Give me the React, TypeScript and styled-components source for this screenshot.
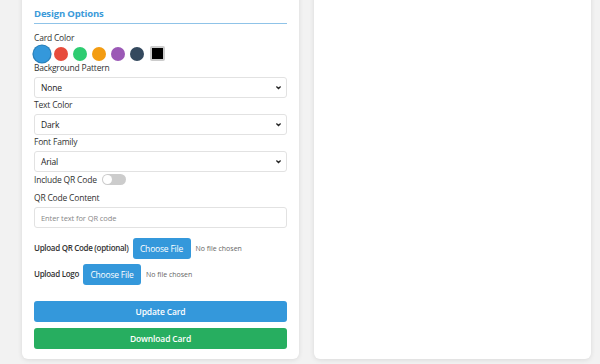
import * as React from 'react';
import styled, { createGlobalStyle } from 'styled-components';

const GlobalStyle = createGlobalStyle`
    html, body {
        margin: 0;
        padding: 0;
        background: #f2f2f2;
        font-family: 'Open Sans', 'Noto Sans', sans-serif;
        color: #333;
        overflow: hidden;
    }
`;

const Page = styled.div`
    display: grid;
    grid-template-columns: 277px 277px;
    gap: 15px;
    padding: 0 9px 5px 22px;
    margin-top: -12px;
`;

const Panel = styled.div`
    background: #fff;
    border-radius: 6px;
    box-shadow: 0 1px 5px rgba(0, 0, 0, 0.1);
    padding: 19px 12px 10px 12px;
    display: flex;
    flex-direction: column;
`;

const Heading = styled.h3`
    margin: 0 0 8px 0;
    font-size: 9.5px;
    line-height: 13px;
    font-weight: 700;
    letter-spacing: -0.15px;
    color: #3b9ad9;
    padding-bottom: 3px;
    border-bottom: 1px solid #8fc3e8;
`;

const Label = styled.label<{ $bold?: boolean }>`
    display: block;
    font-size: 8.5px;
    line-height: 11px;
    letter-spacing: -0.2px;
    color: #333;
    font-weight: ${(p) => (p.$bold ? 600 : 400)};
`;

const Swatches = styled.div`
    display: flex;
    align-items: center;
    gap: 5px;
    margin: 2px 0 0 0;
    height: 17px;
`;

const Swatch = styled.span<{ $color: string; $active?: boolean }>`
    width: 14px;
    height: 14px;
    border-radius: 50%;
    background: ${(p) => p.$color};
    transform: ${(p) => (p.$active ? 'scale(1.2)' : 'none')};
    box-shadow: ${(p) => (p.$active ? '0 0 0 1px #2a80b9' : 'none')};
    margin-left: ${(p) => (p.$active ? '1px' : '0')};
`;

const ColorPick = styled.span`
    width: 15px;
    height: 15px;
    box-sizing: border-box;
    border: 2px solid #ccc;
    border-radius: 2px;
    background: #000;
    margin-left: 1px;
`;

const Select = styled.div`
    display: flex;
    align-items: center;
    justify-content: space-between;
    height: 21px;
    box-sizing: border-box;
    border: 1px solid #e2e2e2;
    border-radius: 3px;
    padding: 0 4px 0 6px;
    margin: 4px 0 1px 0;
    font-size: 8.5px;
    letter-spacing: -0.15px;
    color: #222;
`;

const Chevron = styled.svg`
    width: 7px;
    height: 7px;
`;

const ToggleRow = styled.div`
    display: flex;
    align-items: center;
    gap: 5px;
    height: 12px;
    margin: 0 0 7px 0;
`;

const Toggle = styled.span`
    position: relative;
    width: 24px;
    height: 11px;
    border-radius: 6px;
    background: #ccc;

    &::after {
        content: '';
        position: absolute;
        left: 1px;
        top: 1px;
        width: 9px;
        height: 9px;
        border-radius: 50%;
        background: #fff;
    }
`;

const TextInput = styled.div`
    height: 21px;
    box-sizing: border-box;
    border: 1px solid #e2e2e2;
    border-radius: 3px;
    padding: 0 6px;
    margin: 4px 0 10px 0;
    display: flex;
    align-items: center;
    font-size: 7.5px;
    letter-spacing: -0.1px;
    color: #888;
`;

const UploadRow = styled.div`
    display: flex;
    align-items: center;
    gap: 4px;
    margin-bottom: 5px;
`;

const UploadLabel = styled(Label)`
    align-self: flex-start;
    margin-top: 4px;
    font-size: 8px;
    letter-spacing: -0.3px;
`;

const FileButton = styled.span`
    display: inline-flex;
    align-items: center;
    justify-content: center;
    width: 58px;
    height: 21px;
    border-radius: 3px;
    background: #3498db;
    color: #fff;
    font-size: 8.5px;
    letter-spacing: -0.2px;
`;

const NoFile = styled.span`
    font-size: 7px;
    color: #666;
    margin-left: 1px;
`;

const Spacer = styled.div`
    height: 5px;
`;

const ActionButton = styled.button<{ $color: string }>`
    display: block;
    width: 100%;
    height: 21px;
    border: none;
    border-radius: 3px;
    background: ${(p) => p.$color};
    color: #fff;
    font-family: inherit;
    font-size: 8.5px;
    font-weight: 600;
    letter-spacing: -0.15px;
    margin-top: 6px;
    padding: 0;
`;

const Preview = styled(Panel)``;

const colors = ['#3498db', '#e74c3c', '#2ecc71', '#f39c12', '#9b59b6', '#34495e'];

function Dropdown({ value }: { value: string }): React.ReactElement {
    return (
        <Select>
            <span>{value}</span>
            <Chevron viewBox="0 0 10 10">
                <path d="M2 3.5 L5 6.5 L8 3.5" fill="none" stroke="#222" strokeWidth="1.8" />
            </Chevron>
        </Select>
    );
}

export default function App(): React.ReactElement {
    return (
        <>
            <GlobalStyle />
            <Page>
                <Panel>
                    <Heading>Design Options</Heading>
                    <Label>Card Color</Label>
                    <Swatches>
                        {colors.map((c, i) => (
                            <Swatch key={c} $color={c} $active={i === 0} />
                        ))}
                        <ColorPick />
                    </Swatches>
                    <Label>Background Pattern</Label>
                    <Dropdown value="None" />
                    <Label>Text Color</Label>
                    <Dropdown value="Dark" />
                    <Label>Font Family</Label>
                    <Dropdown value="Arial" />
                    <ToggleRow>
                        <Label>Include QR Code</Label>
                        <Toggle />
                    </ToggleRow>
                    <Label>QR Code Content</Label>
                    <TextInput>Enter text for QR code</TextInput>
                    <UploadRow>
                        <UploadLabel $bold>Upload QR Code (optional)</UploadLabel>
                        <FileButton>Choose File</FileButton>
                        <NoFile>No file chosen</NoFile>
                    </UploadRow>
                    <UploadRow>
                        <UploadLabel $bold>Upload Logo</UploadLabel>
                        <FileButton>Choose File</FileButton>
                        <NoFile>No file chosen</NoFile>
                    </UploadRow>
                    <Spacer />
                    <ActionButton $color="#3498db">Update Card</ActionButton>
                    <ActionButton $color="#27ae60">Download Card</ActionButton>
                </Panel>
                <Preview />
            </Page>
        </>
    );
}
